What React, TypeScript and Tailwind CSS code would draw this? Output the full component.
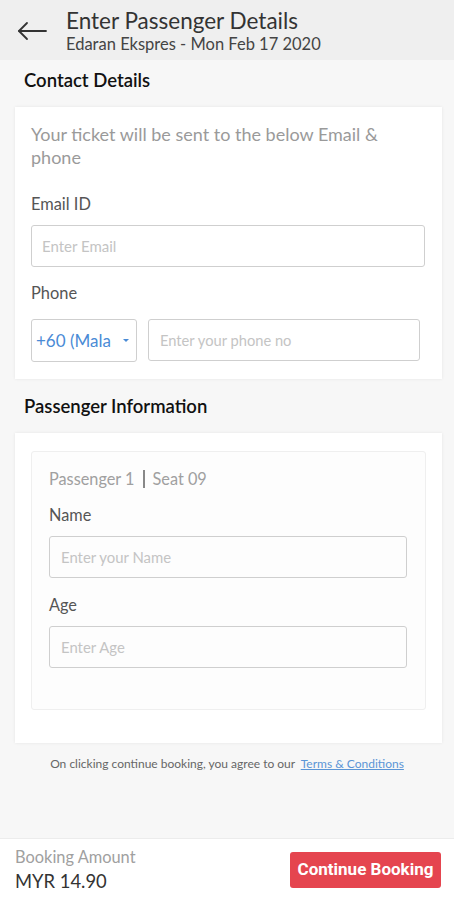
import React from "react";

export default function App() {
  return (
    <div className="flex flex-col h-[900px] bg-[#f7f7f7]" style={{ fontFamily: "Lato, 'Noto Sans', sans-serif" }}>
      <header className="h-[60px] bg-[#efefef] flex items-start shrink-0">
        <div className="w-[66px] flex items-center pl-[17px] pt-[21px]">
          <svg width="30" height="20" viewBox="0 0 30 20" fill="none" stroke="#333" strokeWidth="1.8" strokeLinecap="round" strokeLinejoin="round">
            <path d="M2 10 H29" />
            <path d="M10 2 L2 10 L10 18" />
          </svg>
        </div>
        <div className="flex flex-col pt-[9px]">
          <div className="text-[22.5px] leading-[24px] text-[#333]">Enter Passenger Details</div>
          <div className="mt-[1px] text-[16.5px] leading-[20px] text-[#444]">Edaran Ekspres - Mon Feb 17 2020</div>
        </div>
      </header>

      <div className="flex-1 flex flex-col">
        <div className="px-[24px] pt-[8px] pb-[15px] text-[18.5px] leading-[24px] font-semibold text-[#111]">Contact Details</div>
        <div className="mx-[15px] w-[427px] bg-white shadow-[0_0_3px_rgba(0,0,0,0.08)] px-[16px] pt-[16px] pb-[17px]">
          <div className="text-[18px] leading-[23px] text-[#9a9a9a]">Your ticket will be sent to the below Email &amp; phone</div>
          <div className="mt-[25px] text-[16.4px] leading-[20px] text-[#555]">Email ID</div>
          <div className="mt-[11px] h-[42px] w-[394px] border border-[#cfcfcf] rounded-[3px] flex items-center px-[10px] text-[15px] text-[#c4c4c4]">Enter Email</div>
          <div className="mt-[16px] text-[16.4px] leading-[20px] text-[#555]">Phone</div>
          <div className="mt-[16px] flex gap-[11px]">
            <div className="h-[43px] w-[106px] border border-[#cfcfcf] rounded-[3px] flex items-center pl-[4px] pr-[6px] justify-between">
              <span className="text-[17px] text-[#4a8bd6]">+60 (Mala</span>
              <svg width="8" height="5" viewBox="0 0 8 5"><path d="M1 1 L4 4 L7 1 Z" fill="#4a8bd6" /></svg>
            </div>
            <div className="h-[42px] w-[272px] border border-[#cfcfcf] rounded-[3px] flex items-center px-[11px] text-[14.7px] text-[#c4c4c4]">Enter your phone no</div>
          </div>
        </div>

        <div className="px-[24px] pt-[15px] pb-[15px] text-[18.5px] leading-[24px] font-semibold text-[#111]">Passenger Information</div>
        <div className="mx-[15px] w-[427px] bg-white shadow-[0_0_3px_rgba(0,0,0,0.08)] px-[16px] pt-[18px] pb-[33px]">
          <div className="bg-[#fdfdfd] border border-[#efefef] rounded-[3px] px-[17px] pt-[17px] pb-[41px]">
            <div className="text-[16.3px] leading-[20px] text-[#a0a0a0] flex items-center">
              <span>Passenger 1</span>
              <span className="mx-[8px] inline-block w-[2px] h-[18px] bg-[#888]"></span>
              <span>Seat 09</span>
            </div>
            <div className="mt-[16px] text-[16.3px] leading-[20px] text-[#555]">Name</div>
            <div className="mt-[11px] h-[42px] w-[358px] border border-[#cfcfcf] rounded-[3px] flex items-center px-[11px] text-[14.9px] text-[#c4c4c4]">Enter your Name</div>
            <div className="mt-[17px] text-[16.3px] leading-[20px] text-[#555]">Age</div>
            <div className="mt-[11px] h-[42px] w-[358px] border border-[#cfcfcf] rounded-[3px] flex items-center px-[11px] text-[14.9px] text-[#c4c4c4]">Enter Age</div>
          </div>
        </div>

        <div className="mt-[13px] text-center text-[12px] leading-[16px] text-[#666]">
          On clicking continue booking, you agree to our&nbsp;&nbsp;<span className="text-[#5b95d6] underline">Terms &amp; Conditions</span>
        </div>
      </div>

      <footer className="h-[62px] shrink-0 bg-white border-t border-[#ececec] flex items-center justify-between pl-[15px] pr-[13px]">
        <div className="flex flex-col">
          <span className="text-[16.4px] leading-[20px] text-[#a0a0a0]">Booking Amount</span>
          <span className="text-[18.4px] leading-[24px] text-[#333] mt-[2px]">MYR 14.90</span>
        </div>
        <button className="h-[36px] w-[151px] bg-[#e5454f] rounded-[3px] text-white text-[17px] font-bold" style={{ fontFamily: "Roboto, sans-serif" }}>Continue Booking</button>
      </footer>
    </div>
  );
}
